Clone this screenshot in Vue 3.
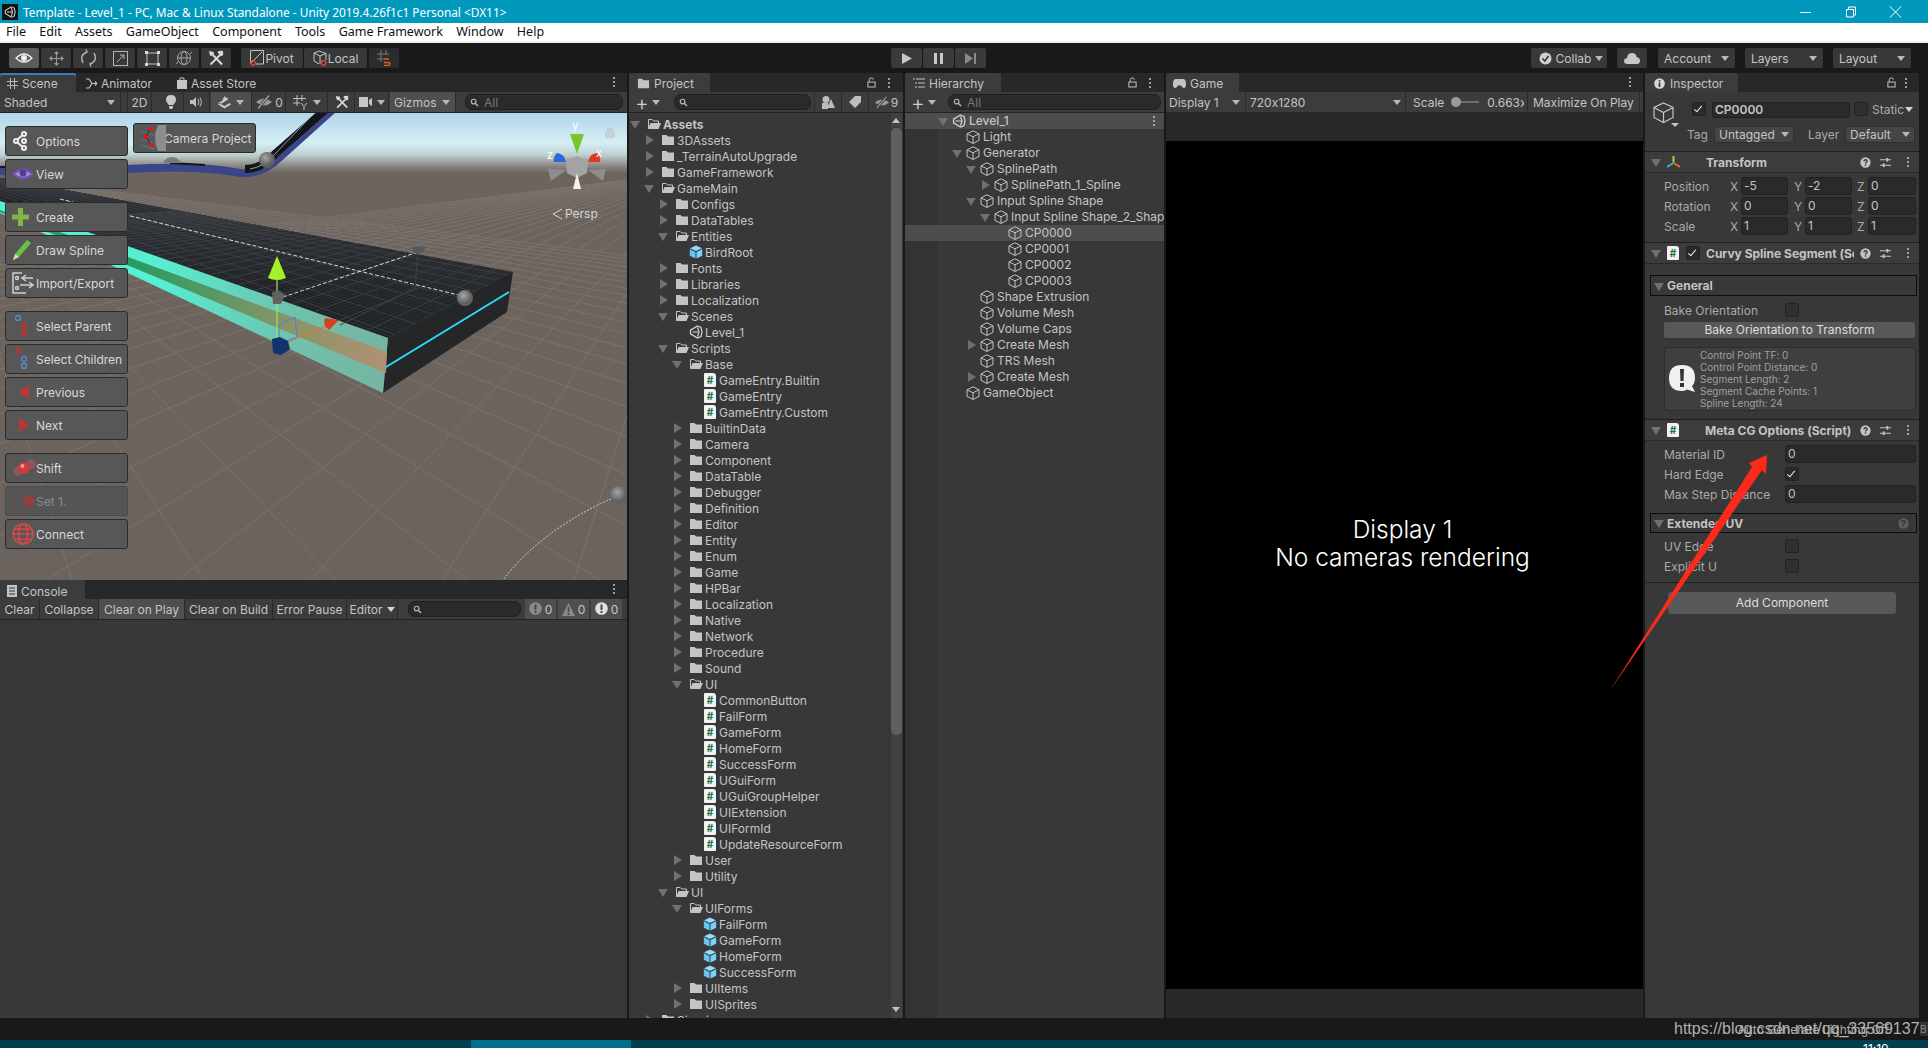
<script setup>
const menus = ['File', 'Edit', 'Assets', 'GameObject', 'Component', 'Tools', 'Game Framework', 'Window', 'Help']

// project tree: [name, depth, kind]  kind: o=open c=closed s=script p=prefab u=scene
const projectRows = [
  ['Assets', 0, 'o'], ['3DAssets', 1, 'c'], ['_TerrainAutoUpgrade', 1, 'c'], ['GameFramework', 1, 'c'],
  ['GameMain', 1, 'o'], ['Configs', 2, 'c'], ['DataTables', 2, 'c'], ['Entities', 2, 'o'], ['BirdRoot', 3, 'p'],
  ['Fonts', 2, 'c'], ['Libraries', 2, 'c'], ['Localization', 2, 'c'], ['Scenes', 2, 'o'], ['Level_1', 3, 'u'],
  ['Scripts', 2, 'o'], ['Base', 3, 'o'], ['GameEntry.Builtin', 4, 's'], ['GameEntry', 4, 's'], ['GameEntry.Custom', 4, 's'],
  ['BuiltinData', 3, 'c'], ['Camera', 3, 'c'], ['Component', 3, 'c'], ['DataTable', 3, 'c'], ['Debugger', 3, 'c'],
  ['Definition', 3, 'c'], ['Editor', 3, 'c'], ['Entity', 3, 'c'], ['Enum', 3, 'c'], ['Game', 3, 'c'], ['HPBar', 3, 'c'],
  ['Localization', 3, 'c'], ['Native', 3, 'c'], ['Network', 3, 'c'], ['Procedure', 3, 'c'], ['Sound', 3, 'c'],
  ['UI', 3, 'o'], ['CommonButton', 4, 's'], ['FailForm', 4, 's'], ['GameForm', 4, 's'], ['HomeForm', 4, 's'],
  ['SuccessForm', 4, 's'], ['UGuiForm', 4, 's'], ['UGuiGroupHelper', 4, 's'], ['UIExtension', 4, 's'], ['UIFormId', 4, 's'],
  ['UpdateResourceForm', 4, 's'], ['User', 3, 'c'], ['Utility', 3, 'c'], ['UI', 2, 'o'], ['UIForms', 3, 'o'],
  ['FailForm', 4, 'p'], ['GameForm', 4, 'p'], ['HomeForm', 4, 'p'], ['SuccessForm', 4, 'p'], ['UIItems', 3, 'c'],
  ['UISprites', 3, 'c'], ['Sirenix', 1, 'c'],
].map(([name, depth, kind]) => ({ name, depth, kind }))

// hierarchy: [name, depth, arrow]
const hierarchyRows = [
  ['Light', 1, ''], ['Generator', 1, 'o'], ['SplinePath', 2, 'o'], ['SplinePath_1_Spline', 3, 'c'],
  ['Input Spline Shape', 2, 'o'], ['Input Spline Shape_2_Shape', 3, 'o'], ['CP0000', 4, ''], ['CP0001', 4, ''],
  ['CP0002', 4, ''], ['CP0003', 4, ''], ['Shape Extrusion', 2, ''], ['Volume Mesh', 2, ''], ['Volume Caps', 2, ''],
  ['Create Mesh', 2, 'c'], ['TRS Mesh', 2, ''], ['Create Mesh', 2, 'c'], ['GameObject', 1, ''],
].map(([name, depth, arrow]) => ({ name, depth, arrow }))

const helpLines = ['Control Point TF: 0', 'Control Point Distance: 0', 'Segment Length: 2', 'Segment Cache Points: 1', 'Spline Length: 24']

const vectors = [
  { label: 'Position', x: '-5', y: '-2', z: '0' },
  { label: 'Rotation', x: '0', y: '0', z: '0' },
  { label: 'Scale', x: '1', y: '1', z: '1' },
]

// floor grid, two fans of lines out of the vanishing points
const HORIZON = 57
const BOTTOM = 467
function fan(vx, from, step, count) {
  const lines = []
  for (let i = 0; i < count; i++) {
    const bx = from + i * step
    const top = HORIZON + 8
    lines.push({
      x1: vx + (bx - vx) * (top - HORIZON) / (BOTTOM - HORIZON),
      y1: top,
      x2: bx,
      y2: BOTTOM,
    })
  }
  return lines
}
const groundLines = [...fan(-60, -60, 132, 26), ...fan(706, 706, -132, 26)]
const deckMinor = [...fan(-60, -60, 27, 200), ...fan(706, 706, -27, 200)]
const deckMajor = [...fan(-60, -6, 135, 40), ...fan(706, 652, -135, 40)]
</script>

<template>
  <div class="editor">
    <!-- shared icons -->
    <svg class="defs" width="0" height="0">
      <symbol id="i-cube" viewBox="0 0 14 14">
        <path d="M7 .8 13 3.800V10.400L7 13.400 1 10.400V3.800ZM1 3.800 7 6.800 13 3.800M7 6.800V13.400" fill="none" stroke="#c4c4c4" stroke-width="1" />
      </symbol>
      <symbol id="i-folder" viewBox="0 0 14 14">
        <path d="M1 2H5.500L7 3.500H13V12H1Z" fill="#c4c4c4" />
      </symbol>
      <symbol id="i-folder-open" viewBox="0 0 14 14">
        <path d="M1.500 11V2.500H5.200L6.700 4H11.500V6" fill="none" stroke="#c4c4c4" />
        <path d="M3.500 6H14L11.500 12H1Z" fill="#c4c4c4" />
      </symbol>
      <symbol id="i-prefab" viewBox="0 0 14 14">
        <path d="M7 .5 13 3.300 7 6 1 3.300Z" fill="#8fdcff" />
        <path d="M.8 4.200 6.500 6.900V13.600L.8 10.800Z" fill="#62c6f6" />
        <path d="M13.200 4.200 7.500 6.900V13.600L13.200 10.800Z" fill="#7ad2fb" />
      </symbol>
      <symbol id="i-unity" viewBox="0 0 14 14">
        <path d="M8.500 1 12 2.500 13 7 12 11.500 8.500 13 1.500 8.800V5.200ZM3.500 7H9M8.500 2.500 10 7 8.500 11.500" fill="none" stroke="#d6d6d6" stroke-width="1.200" />
      </symbol>
      <symbol id="i-hide" viewBox="0 0 18 14">
        <path d="M1 7Q9 0 17 7 9 14 1 7Z" fill="#9a9a9a" />
        <path d="M3 13.500 14 .5" stroke="#3c3c3c" stroke-width="3" />
        <path d="M3 13.500 14 .5" stroke="#a6a6a6" stroke-width="1.200" />
      </symbol>
      <symbol id="i-tools" viewBox="0 0 16 16">
        <path d="M5 5 14 14.500" stroke="#d8d8d8" stroke-width="2" />
        <path d="M1 1 5.500 2 6 4 4 6 2 5.500Z" fill="#d8d8d8" />
        <path d="M13 4 2.500 14.500" stroke="#d8d8d8" stroke-width="2" />
        <path d="M10.500 1 15 .8 15.200 5 13.500 6.300 9.500 2.500Z" fill="#d8d8d8" />
      </symbol>
      <symbol id="i-help" viewBox="0 0 12 12">
        <circle cx="6" cy="6" r="5.600" fill="currentColor" />
        <path d="M4.200 4.800Q4.400 3 6 3 7.800 3 7.800 4.500 7.800 5.400 6.800 5.900 6 6.300 6 7.200" fill="none" stroke="#383838" stroke-width="1.400" />
        <rect x="5.200" y="8" width="1.600" height="1.500" fill="#383838" />
      </symbol>
      <symbol id="i-sliders" viewBox="0 0 12 12">
        <path d="M0 3H12M0 9H12" stroke="#c4c4c4" stroke-width="1.300" />
        <rect x="7" y="1" width="2" height="4" fill="#c4c4c4" />
        <rect x="3" y="7" width="2" height="4" fill="#c4c4c4" />
      </symbol>
      <symbol id="i-lock" viewBox="0 0 10 12">
        <path d="M2.500 5V2.800Q2.500 1 4.800 1 7 1 7 2.800" fill="none" stroke="#c4c4c4" stroke-width="1.100" />
        <rect x="1" y="5.500" width="8" height="5.500" fill="none" stroke="#c4c4c4" stroke-width="1.100" />
      </symbol>
      <symbol id="i-mag" viewBox="0 0 10 10">
        <circle cx="4" cy="4" r="2.600" fill="none" stroke="#b8b8b8" stroke-width="1.300" />
        <path d="M6 6 9 9" stroke="#b8b8b8" stroke-width="1.600" />
      </symbol>
    </svg>

    <!-- window title -->
    <header class="titlebar">
      <span class="app-icon"><svg width="12" height="12"><use href="#i-unity" /></svg></span>
      <span class="title-text">Template - Level_1 - PC, Mac &amp; Linux Standalone - Unity 2019.4.26f1c1 Personal &lt;DX11&gt;</span>
      <div class="win-btns">
        <svg class="win-btn" viewBox="0 0 45 12"><path d="M17 6.500H28" stroke="#fff" /></svg>
        <svg class="win-btn" viewBox="0 0 45 12"><path d="M18.500 3.500H25.500V11H18.500ZM20.500 3.500V1H27.500V9H25.500" fill="none" stroke="#fff" /></svg>
        <svg class="win-btn" viewBox="0 0 45 12"><path d="M17 .5 28 11.500M28 .5 17 11.500" stroke="#fff" /></svg>
      </div>
    </header>

    <nav class="menubar">
      <span v-for="m in menus" :key="m">{{ m }}</span>
    </nav>

    <!-- main toolbar -->
    <div class="toolbar">
      <div class="tool-group">
        <span class="tool tool--on">
          <svg width="18" height="14" viewBox="0 0 18 14"><path d="M1 7Q9 -1 17 7 9 15 1 7Z" fill="none" stroke="#eee" stroke-width="1.300" /><circle cx="9" cy="7" r="3" fill="#eee" /></svg>
        </span>
        <span class="tool">
          <svg width="17" height="17" viewBox="0 0 17 17" fill="#9a9a9a"><path d="M8.500 1 11 4H6ZM8.500 16 6 13H11ZM1 8.500 4 6V11ZM16 8.500 13 11V6Z" /><path d="M8.500 3V14M3 8.500H14" stroke="#9a9a9a" /></svg>
        </span>
        <span class="tool">
          <svg width="17" height="18" viewBox="0 0 17 18" fill="none" stroke="#b4b4b4" stroke-width="1.400"><path d="M3 14Q-1 6 7 3L6 .5M14 4Q18 12 10 15L11 17.500" /></svg>
        </span>
        <span class="tool">
          <svg width="15" height="15" viewBox="0 0 15 15" fill="none" stroke="#b4b4b4"><rect x=".5" y=".5" width="14" height="14" /><path d="M4 11 11 4M7 4H11V8" /></svg>
        </span>
        <span class="tool">
          <svg width="15" height="15" viewBox="0 0 15 15"><rect x="2" y="2" width="11" height="11" fill="none" stroke="#c0c0c0" /><path d="M0 0H3V3H0ZM12 0H15V3H12ZM0 12H3V15H0ZM12 12H15V15H12Z" fill="#d8d8d8" /></svg>
        </span>
        <span class="tool">
          <svg width="18" height="18" viewBox="0 0 18 18" fill="none" stroke="#a8a8a8"><circle cx="9" cy="9" r="6.500" /><ellipse cx="9" cy="9" rx="3" ry="6.500" /><path d="M2.500 9H15.500M1 15 4 12M17 3 14 6" /></svg>
        </span>
        <span class="tool"><svg width="16" height="16"><use href="#i-tools" /></svg></span>
      </div>
      <span class="tool tool--wide tool--pivot">
        <svg width="14" height="16" viewBox="0 0 14 16" fill="none"><path d="M.5 14V.5H13.500V14H6M1 13 12 2" stroke="#c4c4c4" /><circle cx="3" cy="13" r="2.300" stroke="#e4513a" stroke-width="1.200" /></svg>
        Pivot
      </span>
      <span class="tool tool--wide tool--local">
        <svg width="14" height="16" viewBox="0 0 14 16" fill="none"><path d="M6 1 13 3.500V10M6 1 1 3V11L6 14M1 3 7 6V14M7 6 13 3.500" stroke="#c4c4c4" /><circle cx="10.500" cy="13" r="2.300" stroke="#e4513a" stroke-width="1.200" /></svg>
        Local
      </span>
      <span class="tool tool--dim tool--snap">
        <svg width="14" height="16" viewBox="0 0 14 16" fill="none"><path d="M4 0V12M9 0V5M0 4H12M0 9H7" stroke="#7b7b7b" /><path d="M7 9H12M7 12.500H11Q13 12.500 13 14 13 15.500 11 15.500H7" stroke="#d46a2a" stroke-width="1.300" /></svg>
      </span>
      <div class="play-group">
        <span class="tool tool--play"><svg width="10" height="11" viewBox="0 0 10 11"><path d="M0 0 10 5.500 0 11Z" fill="#c8c8c8" /></svg></span>
        <span class="tool tool--play"><svg width="9" height="11" viewBox="0 0 9 11"><path d="M0 0H3V11H0ZM6 0H9V11H6Z" fill="#c8c8c8" /></svg></span>
        <span class="tool tool--play tool--dim"><svg width="11" height="11" viewBox="0 0 11 11"><path d="M0 0 8 5.500 0 11ZM9 0H11V11H9Z" fill="#8a8a8a" /></svg></span>
      </div>
      <div class="right-group">
        <span class="tool drop drop--collab">
          <svg width="13" height="13" viewBox="0 0 13 13"><circle cx="6.500" cy="6.500" r="6" fill="#cfcfcf" /><path d="M3.500 6.500 5.800 9 9.500 4" fill="none" stroke="#333" stroke-width="1.500" /></svg>
          Collab <i class="caret"></i>
        </span>
        <span class="tool drop--cloud">
          <svg width="16" height="12" viewBox="0 0 16 12"><path d="M3.500 12Q0 12 0 9 0 6.500 3 6 3.500 1 8 1 12 1 12.500 5 16 5.500 16 8.500 16 12 12.500 12Z" fill="#c8c8c8" /></svg>
        </span>
        <span class="tool drop drop--account">Account <i class="caret"></i></span>
        <span class="tool drop drop--layers">Layers <i class="caret"></i></span>
        <span class="tool drop drop--layers">Layout <i class="caret"></i></span>
      </div>
    </div>

    <div class="workspace">
      <!-- scene + console -->
      <div class="col-left">
        <section class="scene-panel">
          <div class="tabs">
            <span class="tab tab--focus tab--scene">
              <svg width="11" height="11" viewBox="0 0 11 11"><path d="M3.500 0V11M7.500 0V11M0 3.500H11M0 7.500H11" stroke="#b8b8b8" /></svg>
              Scene
            </span>
            <span class="tab tab--off tab--animator">
              <svg width="11" height="11" viewBox="0 0 11 11"><path d="M0 1H3L6 5.500 3 10H0M6 5.500H11M9 3.500 11 5.500 9 7.500" fill="none" stroke="#c4c4c4" stroke-width="1.200" /></svg>
              Animator
            </span>
            <span class="tab tab--off tab--store">
              <svg width="10" height="12" viewBox="0 0 10 12"><path d="M0 3H10V12H0Z" fill="#c4c4c4" /><path d="M3 3V1H7V3" fill="none" stroke="#c4c4c4" /></svg>
              Asset Store
            </span>
            <span class="kebab"></span>
          </div>
          <div class="bar scene-bar">
            <span class="st st-shaded">Shaded <i class="caret caret--end"></i></span>
            <span class="st st-2d">2D</span>
            <span class="st st-icon">
              <svg width="10" height="14" viewBox="0 0 10 14"><path d="M5 0Q10 0 10 5 10 7.500 7.500 9.500V10H2.500V9.500Q0 7.500 0 5 0 0 5 0ZM3 11H7V12.500L6 14H4L3 12.500Z" fill="#c8c8c8" /></svg>
            </span>
            <span class="st st-icon">
              <svg width="13" height="12" viewBox="0 0 13 12"><path d="M0 4H3L6 1V11L3 8H0Z" fill="#bdbdbd" /><path d="M8 3Q10 6 8 9M10 1.500Q13 6 10 10.500" fill="none" stroke="#bdbdbd" /></svg>
            </span>
            <span class="st st-on st-fx">
              <svg width="13" height="13" viewBox="0 0 13 13"><path d="M6.500 0 8 2 10 1.500 9.500 4 2 8.500 0 7 4 5ZM0 8.500 6.500 12.500 13 8.500 11.500 7 6.500 10 1.500 7Z" fill="#c8c8c8" /></svg>
              <i class="caret"></i>
            </span>
            <span class="st st-hid"><svg width="18" height="14"><use href="#i-hide" /></svg>0</span>
            <span class="st st-grid">
              <svg width="15" height="15" viewBox="0 0 15 15" fill="none" stroke="#c0c0c0"><path d="M4 0V11M9 0V6M0 3.500H13M0 8H7" /><path d="M8 8 11 11.500 14 8M11 11.500V15" /></svg>
              <i class="caret"></i>
            </span>
            <span class="st st-icon st-tools"><svg width="14" height="14"><use href="#i-tools" /></svg></span>
            <span class="st st-cam">
              <svg width="13" height="10" viewBox="0 0 13 10"><path d="M0 0H9V10H0ZM10 3 13 1V9L10 7Z" fill="#c8c8c8" /></svg>
              <i class="caret"></i>
            </span>
            <span class="st st-on st-gizmos">Gizmos <i class="caret caret--end"></i></span>
            <span class="search search--scene"><svg width="9" height="9"><use href="#i-mag" /></svg><em>All</em></span>
          </div>

          <div class="scene-view">
            <svg class="scene-gfx" width="627" height="467" viewBox="0 0 627 467">
              <defs>
                <clipPath id="deck-clip"><path d="M0 65 513 159 388 225 0 88Z" /></clipPath>
                <clipPath id="floor-clip"><rect x="0" y="64" width="627" height="403" /></clipPath>
                <linearGradient id="deck-fill" x1="0" x2="1"><stop offset="0" stop-color="#14171b" /><stop offset="1" stop-color="#24272a" /></linearGradient>
                <linearGradient id="face-fill" x1="0" x2="1"><stop offset=".4" stop-color="#56efd2" /><stop offset=".75" stop-color="#6fc2ad" /><stop offset="1" stop-color="#76b3a2" /></linearGradient>
                <linearGradient id="band-fill" x1="0" x2="1"><stop offset=".35" stop-color="#2a9b62" /><stop offset=".75" stop-color="#8a9468" /><stop offset="1" stop-color="#b09072" /></linearGradient>
                <radialGradient id="ball" cx=".4" cy=".35"><stop offset="0" stop-color="#a4a4a4" /><stop offset="1" stop-color="#606060" /></radialGradient>
              </defs>

              <g clip-path="url(#floor-clip)">
                <line v-for="(l, i) in groundLines" :key="'g' + i" :x1="l.x1" :y1="l.y1" :x2="l.x2" :y2="l.y2" stroke="#7b736d" stroke-width="1" />
              </g>

              <!-- far spline -->
              <path d="M0 58Q60 54 128 56 200 52 240 60 262 62 280 44L340 -10" fill="none" stroke="#3b4688" stroke-width="8" />
              <path d="M0 54 95 52M170 50 205 52" fill="none" stroke="#15171c" stroke-width="2" />
              <path d="M245 56Q262 56 276 40L333 -10" fill="none" stroke="#13151a" stroke-width="8" />
              <path d="M250 56Q264 54 276 40L320 -6" fill="none" stroke="#bdbdbd" stroke-width=".8" />
              <path d="M163 50A10 10 0 0 1 181 50Z" fill="#7a7a7a" />
              <circle cx="267" cy="47" r="8" fill="url(#ball)" />

              <!-- deck -->
              <path d="M0 65 513 159 388 225 0 88Z" fill="url(#deck-fill)" />
              <g clip-path="url(#deck-clip)">
                <line v-for="(l, i) in deckMinor" :key="'m' + i" :x1="l.x1" :y1="l.y1" :x2="l.x2" :y2="l.y2" stroke="#2f3337" stroke-width=".6" />
                <line v-for="(l, i) in deckMajor" :key="'d' + i" :x1="l.x1" :y1="l.y1" :x2="l.x2" :y2="l.y2" stroke="#3f4346" stroke-width=".8" />
              </g>
              <path d="M513 159 507 199 383 280 388 225Z" fill="#242628" />
              <path d="M0 88 388 225 383 280 0 100Z" fill="url(#face-fill)" />
              <path d="M0 97 387 239 386 260 0 99Z" fill="url(#band-fill)" />
              <path d="M386 254 509 179" stroke="#2bdcff" stroke-width="2" />

              <path d="M60 86 467 184M283 184 418 139" fill="none" stroke="#d8d8d8" stroke-dasharray="4 2" stroke-width="1" />
              <path d="M418 139 415 175 340 212" fill="none" stroke="#3e4245" />
              <path d="M412 134H426L423 140H414Z" fill="#55585a" />
              <circle cx="465" cy="185" r="8" fill="url(#ball)" />

              <!-- move gizmo -->
              <path d="M277 163V232" stroke="#a6e05a" stroke-width="1.200" />
              <path d="M277 143 286 165Q277 169 268 165Z" fill="#a4f02c" />
              <path d="M280 232 332 211" stroke="#e86a3c" stroke-width="1.200" />
              <path d="M339 207 325 205Q322 212 329 217Z" fill="#d8401a" />
              <path d="M279 231 279 212 295 204 297 224Z" fill="none" stroke="#4d7fe0" />
              <path d="M272 226 280 224 288 228 290 236 281 242 273 240Z" fill="#12336e" />
              <path d="M272 179 280 178 285 182 281 191 273 191Z" fill="#616161" />

              <!-- end of curve, low right -->
              <path d="M627 379Q545 412 503 467" fill="none" stroke="#d4d4d4" stroke-dasharray="2 1.500" />
              <circle cx="619" cy="382" r="9" fill="url(#ball)" />

              <!-- view gizmo -->
              <g>
                <path d="M570 21H584L577 41Z" fill="#7ac52f" />
                <path d="M588 49Q589 41 597 40 601 44 600 49Z" fill="#df3a22" />
                <path d="M566 49Q565 41 557 40 553 44 554 49Z" fill="#2a68e0" />
                <path d="M577 43 588 47 587 60 577 65 567 60 566 47Z" fill="#a4a4a6" />
                <path d="M566 57 548 56 551 68Z" fill="#8d8d8d" />
                <path d="M588 57 606 56 603 68Z" fill="#8d8d8d" />
                <path d="M577 60 581 76H573Z" fill="#f2f2f2" />
                <text class="axis" x="572" y="17">y</text>
                <text class="axis" x="596" y="44">x</text>
                <text class="axis" x="547" y="46">z</text>
                <path d="M605 18H615V25H605ZM607 18V15H613V18" fill="#b9c4c8" opacity=".6" />
                <path d="M562 96 553 101 562 106" fill="none" stroke="#d8d8d8" stroke-width="1" />
                <text class="persp" x="565" y="105">Persp</text>
              </g>
            </svg>

            <button class="cam-btn">
              <svg width="30" height="26" viewBox="0 0 30 26"><path d="M22 0Q16 13 22 26L30 26V0Z" fill="#8d8d8d" /><path d="M5 6 18 10M5 14 18 18M5 20 18 24" stroke="#3d8cc0" stroke-width=".8" /><path d="M14 4 10 12 15 20" fill="none" stroke="#222" /><rect x="13" y="2" width="4" height="4" fill="#f01010" /><rect x="8" y="10" width="4" height="4" fill="#f01010" /><rect x="13" y="18" width="4" height="4" fill="#f01010" /></svg>
              Camera Project
            </button>

            <div class="spline-tools">
              <div class="btn-group">
                <button>
                  <svg width="20" height="20" viewBox="0 0 20 20" fill="none" stroke="#eee" stroke-width="2"><circle cx="12" cy="3" r="2" /><circle cx="4" cy="10" r="2" /><circle cx="12" cy="10" r="2" /><circle cx="12" cy="17" r="2" /><path d="M5.500 8.500 10 4.500M5.500 11.500 10 15.500" /></svg>
                  Options
                </button>
                <button>
                  <svg width="22" height="14" viewBox="0 0 22 14"><path d="M0 7Q11 -4 22 7 11 18 0 7Z" fill="#6f52b4" /><path d="M3 7Q11 1 19 7 11 13 3 7Z" fill="#a796d4" /><circle cx="11" cy="6" r="3.500" fill="#553c98" /></svg>
                  View
                </button>
              </div>
              <div class="btn-group">
                <button>
                  <svg width="17" height="18" viewBox="0 0 17 18"><path d="M6 0H11V6.500H17V11.500H11V18H6V11.500H0V6.500H6Z" fill="#82b24a" /></svg>
                  Create
                </button>
                <button>
                  <svg width="20" height="22" viewBox="0 0 20 22"><path d="M1 21 3 15 15 1 19 4 7 18Z" fill="#6cc04a" /><path d="M1 21 3 15 7 18Z" fill="#e2d6a0" /></svg>
                  Draw Spline
                </button>
                <button>
                  <svg width="22" height="22" viewBox="0 0 22 22" fill="none" stroke="#d0d0d0" stroke-width="1.500"><path d="M10 1H1V21H10M8 21H14" /><circle cx="5" cy="6" r="1.500" /><circle cx="5" cy="16" r="1.500" /><path d="M10 6H21M14 3 10 6 14 9M8 13H20M17 10 21 13 17 16" /></svg>
                  Import/Export
                </button>
              </div>
              <div class="btn-group">
                <button>
                  <svg width="18" height="22" viewBox="0 0 18 22"><circle cx="6" cy="3" r="2.500" fill="none" stroke="#5d87c9" stroke-width="1.400" /><circle cx="12" cy="11" r="3" fill="#b23636" /><circle cx="12" cy="18" r="3" fill="#b23636" /></svg>
                  Select Parent
                </button>
                <button>
                  <svg width="18" height="22" viewBox="0 0 18 22"><circle cx="6" cy="3" r="3" fill="#b23636" /><circle cx="12" cy="11" r="2.500" fill="none" stroke="#5d87c9" stroke-width="1.400" /><circle cx="12" cy="18" r="2.500" fill="none" stroke="#5d87c9" stroke-width="1.400" /></svg>
                  Select Children
                </button>
                <button>
                  <svg width="20" height="14" viewBox="-6 0 20 14"><path d="M12 0 5 4 0 7 12 14 10 7Z" fill="#c23434" /></svg>
                  Previous
                </button>
                <button>
                  <svg width="20" height="14" viewBox="-6 0 20 14"><path d="M0 0 7 4 12 7 0 14 2 7Z" fill="#c23434" /></svg>
                  Next
                </button>
              </div>
              <div class="btn-group">
                <button>
                  <svg width="24" height="18" viewBox="0 0 24 18"><circle cx="6" cy="12" r="5" fill="#8a5858" /><circle cx="19" cy="5" r="5" fill="#8a5858" /><circle cx="12" cy="9" r="6" fill="#d03a3a" /><circle cx="10.500" cy="7" r="2" fill="#ee9a9a" /></svg>
                  Shift
                </button>
                <button class="is-disabled">
                  <svg width="24" height="14" viewBox="0 0 24 14"><text x="0" y="11" class="set-one">1.</text><circle cx="17" cy="7" r="6" fill="#8f3f3f" /></svg>
                  Set 1.
                </button>
                <button>
                  <svg width="22" height="22" viewBox="0 0 22 22" fill="none" stroke="#d84848" stroke-width="1.500"><circle cx="11" cy="11" r="10" /><ellipse cx="11" cy="11" rx="4.500" ry="10" /><path d="M1 11H21M3 6H19M3 16H19" /></svg>
                  Connect
                </button>
              </div>
            </div>
          </div>
        </section>

        <section class="console-panel">
          <div class="tabs">
            <span class="tab tab--console">
              <svg width="10" height="12" viewBox="0 0 10 12"><path d="M0 0H10V12H0Z" fill="#c4c4c4" /><path d="M2 3H8M2 6H8M2 9H8" stroke="#333" /></svg>
              Console
            </span>
            <span class="kebab"></span>
          </div>
          <div class="bar console-bar">
            <span class="ct ct-clear">Clear</span>
            <span class="ct ct-collapse">Collapse</span>
            <span class="ct ct-on ct-play">Clear on Play</span>
            <span class="ct ct-build">Clear on Build</span>
            <span class="ct ct-pause">Error Pause</span>
            <span class="ct ct-editor">Editor <i class="caret caret--light"></i></span>
            <span class="search search--console"><svg width="9" height="9"><use href="#i-mag" /></svg></span>
            <span class="count">
              <svg width="13" height="14" viewBox="0 0 13 14"><circle cx="6.500" cy="6.500" r="6.300" fill="#8a8a8a" /><path d="M5.500 2.500H7.500V8H5.500ZM5.500 9H7.500V11H5.500Z" fill="#444" /></svg>0
            </span>
            <span class="count">
              <svg width="13" height="13" viewBox="0 0 13 13"><path d="M6.500 0 13 13H0Z" fill="#8a8a8a" /><path d="M5.700 4H7.300V9H5.700ZM5.700 10H7.300V12H5.700Z" fill="#444" /></svg>0
            </span>
            <span class="count">
              <svg width="13" height="14" viewBox="0 0 13 14"><circle cx="6.500" cy="6.500" r="6.300" fill="#e2e2e2" /><path d="M5.500 2.500H7.500V8H5.500ZM5.500 9H7.500V11H5.500Z" fill="#444" /></svg>0
            </span>
          </div>
          <div class="console-body"></div>
        </section>
      </div>

      <!-- project -->
      <section class="panel project">
        <div class="tabs">
          <span class="tab tab--project">
            <svg width="13" height="13"><use href="#i-folder" /></svg>
            Project
          </span>
          <span class="tab-actions"><svg width="9" height="11"><use href="#i-lock" /></svg><span class="kebab kebab--static"></span></span>
        </div>
        <div class="bar project-bar">
          <span class="plus">+<i class="caret"></i></span>
          <span class="search search--project"><svg width="9" height="9"><use href="#i-mag" /></svg></span>
          <span class="pb">
            <svg width="13" height="13" viewBox="0 0 13 13"><circle cx="4" cy="3.500" r="3.500" fill="#bdbdbd" /><rect x="0" y="7" width="6" height="6" fill="#bdbdbd" /><path d="M9 3 13 12H5Z" fill="#bdbdbd" /></svg>
          </span>
          <span class="pb">
            <svg width="12" height="12" viewBox="0 0 12 12"><path d="M6 0H12V6L6 12 0 6Z" fill="#bdbdbd" /></svg>
          </span>
          <span class="pb pb--hide"><svg width="16" height="13"><use href="#i-hide" /></svg>9</span>
        </div>
        <div class="tree-wrap">
          <div class="tree">
            <div v-for="(row, i) in projectRows" :key="i" class="row" :class="{ 'row--root': row.depth === 0 }" :style="{ paddingLeft: 1 + row.depth * 14 + 'px' }">
              <i class="arrow" :class="{ 'arrow--open': row.kind === 'o', 'arrow--closed': row.kind === 'c' }"></i>
              <span v-if="row.kind === 's'" class="script-icon">#</span>
              <svg v-else-if="row.kind === 'p'" class="row-icon" width="14" height="14"><use href="#i-prefab" /></svg>
              <svg v-else-if="row.kind === 'u'" class="row-icon" width="14" height="14"><use href="#i-unity" /></svg>
              <svg v-else-if="row.kind === 'o'" class="row-icon" width="14" height="14"><use href="#i-folder-open" /></svg>
              <svg v-else class="row-icon" width="14" height="14"><use href="#i-folder" /></svg>
              <span class="row-name">{{ row.name }}</span>
            </div>
          </div>
          <div class="scroll">
            <i class="scroll-up"></i>
            <span class="scroll-thumb"></span>
            <i class="scroll-down"></i>
          </div>
        </div>
      </section>

      <!-- hierarchy -->
      <section class="panel hierarchy">
        <div class="tabs">
          <span class="tab tab--hier">
            <svg width="12" height="10" viewBox="0 0 12 10"><path d="M0 1H2M3 1H12M2 5H4M5 5H12M2 9H4M5 9H12" stroke="#c4c4c4" /></svg>
            Hierarchy
          </span>
          <span class="tab-actions"><svg width="9" height="11"><use href="#i-lock" /></svg><span class="kebab kebab--static"></span></span>
        </div>
        <div class="bar hier-bar">
          <span class="plus plus--hier">+<i class="caret"></i></span>
          <span class="search search--hier"><svg width="9" height="9"><use href="#i-mag" /></svg><em>All</em></span>
        </div>
        <div class="hier-tree">
          <div class="hier-scene">
            <i class="arrow arrow--open"></i>
            <svg class="row-icon" width="14" height="14"><use href="#i-unity" /></svg>
            <span>Level_1</span>
            <span class="kebab kebab--scene"></span>
          </div>
          <div
            v-for="(row, i) in hierarchyRows"
            :key="i"
            class="hier-row"
            :class="{ 'hier-row--sel': row.name === 'CP0000' }"
            :style="{ paddingLeft: 47 + (row.depth - 1) * 14 + 'px' }"
          >
            <i class="arrow" :class="{ 'arrow--open': row.arrow === 'o', 'arrow--closed': row.arrow === 'c' }"></i>
            <svg class="hier-icon" width="14" height="14"><use href="#i-cube" /></svg>
            <span class="row-name">{{ row.name }}</span>
          </div>
        </div>
      </section>

      <!-- game -->
      <section class="panel game">
        <div class="tabs">
          <span class="tab tab--game">
            <svg width="13" height="9" viewBox="0 0 13 9"><path d="M3 0H10Q13 0 13 5 13 9 11 9 9.500 9 8 6.500H5Q3.500 9 2 9 0 9 0 5 0 0 3 0Z" fill="#c4c4c4" /></svg>
            Game
          </span>
          <span class="kebab"></span>
        </div>
        <div class="bar game-bar">
          <span class="gt gt-display">Display 1 <i class="caret caret--end"></i></span>
          <span class="gt gt-res">720x1280 <i class="caret caret--end"></i></span>
          <span class="gt gt-scale">Scale <i class="slider"></i><em class="scale-val">0.663x</em></span>
          <span class="gt gt-max">Maximize On Play</span>
        </div>
        <div class="game-strip"></div>
        <div class="game-screen">
          <p>Display 1</p>
          <p>No cameras rendering</p>
        </div>
        <div class="game-foot"></div>
      </section>

      <!-- inspector -->
      <section class="panel inspector">
        <div class="tabs">
          <span class="tab tab--insp">
            <svg width="11" height="11" viewBox="0 0 11 11"><circle cx="5.500" cy="5.500" r="5.300" fill="#d8d8d8" /><path d="M4.700 2H6.300V3.500H4.700ZM4.700 4.500H6.300V9H4.700Z" fill="#333" /></svg>
            Inspector
          </span>
          <span class="tab-actions tab-actions--insp"><svg width="9" height="11"><use href="#i-lock" /></svg><span class="kebab kebab--static"></span></span>
        </div>
        <div class="insp-head">
          <div class="head-row">
            <svg class="big-cube" width="28" height="28" viewBox="0 0 28 28">
              <path d="M10.500 1 20 5.500V15.500L10.500 20.500 1 15.500V5.500ZM1 5.500 10.500 10.500 20 5.500M10.500 10.500V20.500" fill="none" stroke="#c4c4c4" stroke-width="1.200" />
              <path d="M18 21H26L22 25Z" fill="#c4c4c4" />
            </svg>
            <span class="check check--on"></span>
            <span class="name-input">CP0000</span>
            <span class="check check--static"></span>
            <span class="static-label">Static <i class="caret caret--light"></i></span>
          </div>
          <div class="tag-row">
            <span class="tag-label">Tag</span>
            <span class="pop pop--tag">Untagged <i class="caret caret--end"></i></span>
            <span class="tag-label tag-label--layer">Layer</span>
            <span class="pop pop--layer">Default <i class="caret caret--end"></i></span>
          </div>
        </div>

        <div class="comp-head">
          <i class="arrow arrow--open"></i>
          <svg class="transform-icon" width="13" height="13" viewBox="0 0 13 13"><path d="M6.500 0V6.500" stroke="#9bdc3c" stroke-width="2" /><path d="M6.500 7 0 11" stroke="#3ea8e6" stroke-width="2" /><path d="M6.500 7 13 11" stroke="#e4692c" stroke-width="2" /></svg>
          <span class="comp-title comp-title--plain">Transform</span>
          <span class="comp-actions"><svg width="11" height="11" class="help"><use href="#i-help" /></svg><svg width="11" height="11"><use href="#i-sliders" /></svg><span class="kebab kebab--static"></span></span>
        </div>
        <div class="transform-body">
          <div v-for="v in vectors" :key="v.label" class="vec-row">
            <span class="vec-label">{{ v.label }}</span>
            <span class="axis-label">X</span><span class="field vec-field">{{ v.x }}</span>
            <span class="axis-label axis-label--y">Y</span><span class="field vec-field">{{ v.y }}</span>
            <span class="axis-label axis-label--z">Z</span><span class="field vec-field vec-field--z">{{ v.z }}</span>
          </div>
        </div>

        <div class="comp-head">
          <i class="arrow arrow--open"></i>
          <span class="script-icon script-icon--comp">#</span>
          <span class="check check--on check--comp"></span>
          <span class="comp-title comp-title--clip">Curvy Spline Segment (Script)</span>
          <span class="comp-actions"><svg width="11" height="11" class="help"><use href="#i-help" /></svg><svg width="11" height="11"><use href="#i-sliders" /></svg><span class="kebab kebab--static"></span></span>
        </div>
        <div class="segment-body">
          <div class="foldout"><i class="arrow arrow--open"></i>General</div>
          <div class="prop prop--bake"><span class="prop-label">Bake Orientation</span><span class="check"></span></div>
          <div class="wide-btn">Bake Orientation to Transform</div>
          <div class="helpbox">
            <svg class="help-bubble" width="26" height="28" viewBox="0 0 26 28"><path d="M13 0Q26 0 26 13 26 18 23 21L26 27 18 24.500Q15.500 26 13 26 0 26 0 13 0 0 13 0Z" fill="#f0f0f0" /><path d="M11 4H15L14.500 16H11.500ZM11 18H15V22H11Z" fill="#333" /></svg>
            <div class="help-lines"><div v-for="l in helpLines" :key="l">{{ l }}</div></div>
          </div>
        </div>

        <div class="comp-head">
          <i class="arrow arrow--open"></i>
          <span class="script-icon script-icon--comp">#</span>
          <span class="comp-title comp-title--meta">Meta CG Options (Script)</span>
          <span class="comp-actions"><svg width="11" height="11" class="help"><use href="#i-help" /></svg><svg width="11" height="11"><use href="#i-sliders" /></svg><span class="kebab kebab--static"></span></span>
        </div>
        <div class="meta-body">
          <div class="prop"><span class="prop-label">Material ID</span><span class="field prop-field">0</span></div>
          <div class="prop"><span class="prop-label">Hard Edge</span><span class="check check--on"></span></div>
          <div class="prop"><span class="prop-label">Max Step Distance</span><span class="field prop-field">0</span></div>
          <div class="foldout foldout--uv"><i class="arrow arrow--open"></i>Extended UV<svg class="fold-help" width="11" height="11"><use href="#i-help" /></svg></div>
          <div class="prop"><span class="prop-label">UV Edge</span><span class="check"></span></div>
          <div class="prop"><span class="prop-label">Explicit U</span><span class="check"></span></div>
        </div>
        <div class="add-wrap"><div class="add-btn">Add Component</div></div>
      </section>
    </div>

    <footer class="statusbar">
      <span class="status-text">Auto Generate Lighting Off</span>
      <span class="status-b">B</span>
    </footer>
    <div class="taskbar">
      <span class="task-active"></span>
      <span class="task-clock">11:10</span>
    </div>

    <!-- annotations laid over the screenshot -->
    <svg class="annot-arrow" width="1928" height="1048" viewBox="0 0 1928 1048">
      <path d="M1609 692 1752 467 1749 463 1767 455 1766 474 1762 470Z" fill="#fb2a1a" />
    </svg>
    <span class="watermark">https://blog.csdn.net/qq_33569137</span>
  </div>
</template>

<style>
html, body {
  margin: 0;
  background: #191919;
  overflow: hidden;
}
</style>

<style scoped>
.editor {
  position: relative;
  width: 1928px;
  height: 1048px;
  display: flex;
  flex-direction: column;
  overflow: hidden;
  background: #191919;
  color: #c4c4c4;
  font-family: Inter, "Liberation Sans", sans-serif;
  font-size: 12px;
  font-feature-settings: "calt" 0;
}

.defs { position: absolute; }

i { font-style: normal; }
em { font-style: normal; }
p { margin: 0; }

/* window chrome */
.titlebar {
  height: 23px;
  background: #0099bc;
  display: flex;
  align-items: center;
  color: #fff;
  font-family: "Noto Sans", sans-serif;
  font-size: 11.850px;
  flex-shrink: 0;
}
.app-icon {
  width: 16px;
  height: 16px;
  margin: 0 5px 0 2px;
  background: #111;
  display: flex;
  align-items: center;
  justify-content: center;
}
.win-btns {
  margin-left: auto;
  padding-right: 10px;
  display: flex;
}
.win-btn { width: 45px; height: 12px; }

.menubar {
  height: 18px;
  border-bottom: 2px solid #f0f0f0;
  background: #fff;
  color: #111;
  font-family: "Noto Sans", sans-serif;
  font-size: 12.500px;
  line-height: 18px;
  display: flex;
  gap: 13.300px;
  padding-left: 6px;
  flex-shrink: 0;
}

.toolbar {
  height: 30px;
  display: flex;
  align-items: flex-start;
  padding: 5px 17px 0 9px;
  box-sizing: border-box;
  flex-shrink: 0;
}
.tool-group { display: flex; gap: 2px; margin-right: 10px; }
.tool {
  width: 30px;
  height: 20px;
  background: #383838;
  border-radius: 2px;
  display: flex;
  align-items: center;
  justify-content: center;
  color: #c4c4c4;
  box-sizing: border-box;
  flex-shrink: 0;
}
.tool--on { background: #5c5c5c; }
.tool--dim { background: #2c2c2c; }
.tool--wide { gap: 1px; }
.tool--pivot { width: 62px; margin-right: 1px; }
.tool--local { width: 63px; margin-right: 2px; }
.tool--snap { width: 30px; }
.play-group { display: flex; gap: 1px; margin-left: 492px; }
.tool--play { width: 31px; background: #3a3a3a; }
.right-group { display: flex; margin-left: auto; gap: 10px; }
.drop { justify-content: space-between; padding: 0 6px; }
.drop--collab { width: 76px; padding: 0 4px 0 8px; }
.drop--cloud { width: 30px; margin-right: 1px; }
.drop--account { width: 77px; }
.drop--layers { width: 78px; }

.caret {
  display: inline-block;
  width: 0;
  height: 0;
  border-left: 4px solid transparent;
  border-right: 4px solid transparent;
  border-top: 5px solid #b8b8b8;
}
.caret--light { border-top-color: #d4d4d4; }

/* panels */
.workspace {
  flex: 1;
  min-height: 0;
  display: flex;
  gap: 2px;
  padding-right: 9px;
}
.panel {
  display: flex;
  flex-direction: column;
  background: #383838;
  min-width: 0;
  overflow: hidden;
}
.col-left {
  width: 627px;
  display: flex;
  flex-direction: column;
  flex-shrink: 0;
}
.project { width: 274px; }
.hierarchy { width: 259px; }
.game { width: 477px; background: #282828; }
.inspector { width: 274px; }

.tabs {
  height: 19px;
  background: #282828;
  display: flex;
  align-items: stretch;
  flex-shrink: 0;
  position: relative;
}
.tab {
  background: #3c3c3c;
  display: flex;
  align-items: center;
  gap: 4px;
  padding-left: 7px;
  color: #c4c4c4;
  box-sizing: border-box;
  border-radius: 2px 2px 0 0;
  padding-top: 1px;
}
.tab--focus { box-shadow: inset 0 2px 0 #3a79bb; }
.tab--scene { width: 76px; }
.tab--off { background: transparent; }
.tab--animator { width: 93px; padding-left: 10px; }
.tab--store { padding-left: 9px; margin-left: -1px; }
.tab--console { width: 85px; padding-top: 3px; }
.tab--project { width: 81px; padding-left: 8px; }
.tab--hier { width: 96px; padding-left: 8px; }
.tab--game { width: 73px; padding-left: 7px; }
.tab--insp { width: 93px; padding-left: 9px; gap: 5px; }

.kebab {
  position: absolute;
  right: 12px;
  top: 4px;
  width: 2px;
  height: 2px;
  background: #c4c4c4;
  box-shadow: 0 4px 0 #c4c4c4, 0 8px 0 #c4c4c4;
  border-radius: 1px;
}
.kebab--static { position: static; display: inline-block; margin-bottom: 8px; }
.tab-actions {
  margin-left: auto;
  padding-right: 13px;
  display: flex;
  align-items: center;
  gap: 12px;
}
.tab-actions--insp { padding-right: 12px; gap: 9px; }

.bar {
  height: 21px;
  background: #3c3c3c;
  border-bottom: 1px solid #232323;
  box-sizing: border-box;
  display: flex;
  align-items: center;
  flex-shrink: 0;
}

.search {
  height: 16px;
  background: #2a2a2a;
  border: 1px solid #1f1f1f;
  border-radius: 7px;
  display: flex;
  align-items: center;
  gap: 5px;
  padding-left: 4px;
  box-sizing: border-box;
  color: #777;
}

/* scene */
.scene-panel {
  height: 507px;
  display: flex;
  flex-direction: column;
  flex-shrink: 0;
  overflow: hidden;
}
.scene-bar .st {
  height: 20px;
  display: flex;
  align-items: center;
  justify-content: center;
  gap: 5px;
  border-right: 1px solid #2a2a2a;
  box-sizing: border-box;
  flex-shrink: 0;
}
.caret--end { margin-left: auto; }
.st-on { background: #4f4f4f; }
.scene-bar .st-shaded { width: 121px; justify-content: flex-start; padding: 0 5px 0 4px; margin-right: 6px; }
.scene-bar .st-2d { width: 25px; margin-right: 6px; border-left: 1px solid #2a2a2a; }
.scene-bar .st-icon { width: 26px; }
.scene-bar .st-fx { width: 41px; margin: 0 1px; }
.scene-bar .st-hid { width: 33px; margin-right: 1px; gap: 2px; }
.scene-bar .st-grid { width: 41px; margin-right: 1px; }
.scene-bar .st-tools { margin-right: 1px; }
.scene-bar .st-cam { width: 33px; margin-right: 1px; }
.scene-bar .st-gizmos { width: 66px; justify-content: flex-start; padding: 0 5px 0 4px; margin-right: 9px; }
.search--scene { width: 158px; }

.scene-view {
  position: relative;
  flex: 1;
  overflow: hidden;
  background: linear-gradient(#b0d4ea 0, #d6eff3 30px, #bcd0d0 42px, #8f8c88 52px, #6d645e 60px, #6b635d 100%);
}
.scene-gfx { position: absolute; left: 0; top: 0; display: block; }
.axis { fill: #fff; font-size: 11px; font-family: Inter, sans-serif; }
.persp { fill: #d4d4d4; font-size: 12px; font-family: Inter, sans-serif; }
.set-one { fill: #6e4a4a; font-size: 11px; font-family: Inter, sans-serif; }

button {
  width: 123px;
  height: 30px;
  background: #575757;
  border: 1px solid #2b2b2b;
  border-radius: 3px;
  color: #d8d8d8;
  font: inherit;
  font-feature-settings: "calt" 0;
  display: flex;
  align-items: center;
  padding: 0;
  position: relative;
  box-sizing: border-box;
  text-align: left;
}
button svg {
  position: absolute;
  left: 6px;
  top: 50%;
  transform: translateY(-50%);
}
.spline-tools {
  position: absolute;
  left: 5px;
  top: 13px;
  display: flex;
  flex-direction: column;
  gap: 13px;
}
.btn-group { display: flex; flex-direction: column; gap: 3px; }
.spline-tools button { padding-left: 30px; }
.is-disabled { background: #555; color: #8a8a8a; border-color: #4a4a4a; }
.cam-btn {
  position: absolute;
  left: 133px;
  top: 10px;
  padding-left: 30px;
}
.cam-btn svg { left: 2px; }

/* console */
.console-panel {
  flex: 1;
  display: flex;
  flex-direction: column;
  min-height: 0;
}
.console-bar .ct {
  height: 20px;
  display: flex;
  align-items: center;
  justify-content: center;
  border-right: 1px solid #2a2a2a;
  box-sizing: border-box;
  flex-shrink: 0;
}
.ct-on { background: #4f4f4f; }
.ct-clear { width: 40px; }
.ct-collapse { width: 59px; }
.ct-play { width: 86px; }
.ct-build { width: 88px; }
.ct-pause { width: 74px; }
.ct-editor { width: 51px; gap: 4px; margin-right: 10px; }
.search--console { width: 113px; margin-right: 4px; }
.count {
  width: 31px;
  height: 20px;
  margin-right: 2px;
  background: #4f4f4f;
  display: flex;
  align-items: center;
  justify-content: center;
  gap: 3px;
  flex-shrink: 0;
}
.console-body { flex: 1; background: #383838; }

/* trees */
.project-bar { padding-left: 6px; }
.plus {
  display: flex;
  align-items: center;
  font-size: 21px;
  font-weight: 300;
  line-height: 1;
  gap: 3px;
  width: 39px;
  flex-shrink: 0;
  color: #d0d0d0;
}
.plus--hier { width: 37px; }
.search--project { width: 141px; margin-right: 3px; }
.pb {
  width: 26px;
  height: 20px;
  border-left: 1px solid #2a2a2a;
  display: flex;
  align-items: center;
  justify-content: center;
  gap: 1px;
  flex-shrink: 0;
}
.pb--hide { width: 34px; }

.tree-wrap {
  flex: 1;
  min-height: 0;
  display: flex;
  overflow: hidden;
}
.tree {
  flex: 1;
  min-width: 0;
  padding-top: 3px;
  overflow: hidden;
}
.row {
  height: 16px;
  display: flex;
  align-items: center;
  white-space: nowrap;
}
.row--root { font-weight: 700; }
.arrow {
  width: 10px;
  height: 10px;
  flex-shrink: 0;
  position: relative;
}
.arrow--open::before {
  content: "";
  position: absolute;
  left: 0;
  top: 2px;
  border-left: 5px solid transparent;
  border-right: 5px solid transparent;
  border-top: 8px solid #707070;
}
.arrow--closed::before {
  content: "";
  position: absolute;
  left: 2px;
  top: 0;
  border-top: 5px solid transparent;
  border-bottom: 5px solid transparent;
  border-left: 8px solid #707070;
}
.row-icon { margin-left: 7px; margin-right: 2px; flex-shrink: 0; }
.row-name { white-space: nowrap; }
.script-icon {
  width: 12px;
  height: 14px;
  margin-left: 8px;
  margin-right: 3px;
  background: #f2f2f2;
  color: #14703a;
  font-size: 10px;
  font-weight: 700;
  line-height: 14px;
  text-align: center;
  flex-shrink: 0;
  border-radius: 1px 3px 1px 1px;
}
.scroll {
  width: 11px;
  background: #414141;
  position: relative;
  flex-shrink: 0;
  margin-right: 1px;
}
.scroll-thumb {
  position: absolute;
  left: 0;
  right: 0;
  top: 15px;
  height: 607px;
  background: #5f5f5f;
  border-radius: 5px;
}
.scroll-up, .scroll-down {
  position: absolute;
  left: 1px;
  border-left: 4px solid transparent;
  border-right: 4px solid transparent;
}
.scroll-up { top: 5px; border-bottom: 5px solid #c4c4c4; }
.scroll-down { bottom: 6px; border-top: 5px solid #c4c4c4; }

.hier-bar { padding-left: 6px; }
.search--hier { width: 213px; }
.hier-tree {
  flex: 1;
  overflow: hidden;
  background: linear-gradient(90deg, #333 32px, #383838 32px);
}
.hier-scene {
  height: 16px;
  background: #4d4d4d;
  display: flex;
  align-items: center;
  padding: 0 0 1px 33px;
  box-sizing: border-box;
  font-weight: 500;
  position: relative;
}
.hier-scene .row-icon { margin-left: 4px; margin-right: 3px; }
.kebab--scene { right: 9px; top: 3px; }
.hier-row {
  height: 16px;
  display: flex;
  align-items: center;
  white-space: nowrap;
  overflow: hidden;
  padding-bottom: 1px;
  box-sizing: border-box;
}
.hier-row--sel { background: #4d4d4d; }
.hier-icon { margin-left: 4px; margin-right: 3px; flex-shrink: 0; }

/* game */
.game-bar .gt {
  height: 20px;
  display: flex;
  align-items: center;
  border-right: 1px solid #2a2a2a;
  box-sizing: border-box;
  flex-shrink: 0;
  white-space: nowrap;
  overflow: hidden;
}
.gt-display { width: 80px; padding: 0 5px 0 3px; }
.gt-res { width: 160px; padding: 0 4px; }
.gt-scale { width: 122px; padding: 0 4px 0 7px; }
.gt-max { width: 112px; padding-left: 5px; }
.scale-val { width: 37px; overflow: hidden; flex-shrink: 0; }
.slider {
  width: 25px;
  height: 2px;
  background: #6f6f6f;
  position: relative;
  margin: 0 8px 0 10px;
  flex-shrink: 0;
}
.slider::before {
  content: "";
  position: absolute;
  left: -3px;
  top: -4px;
  width: 10px;
  height: 10px;
  border-radius: 50%;
  background: #9a9a9a;
}
.game-strip { height: 28px; background: #282828; flex-shrink: 0; }
.game-screen {
  height: 848px;
  background: #000;
  color: #fff;
  font-size: 24.500px;
  font-weight: 300;
  line-height: 28px;
  text-align: center;
  display: flex;
  flex-direction: column;
  justify-content: center;
  padding: 0 4px 44px 0;
  box-sizing: border-box;
  flex-shrink: 0;
}
.game-foot { flex: 1; background: #282828; }

/* inspector */
.insp-head {
  height: 59px;
  padding: 10px 4px 0 8px;
  box-sizing: border-box;
  flex-shrink: 0;
}
.head-row {
  display: flex;
  align-items: flex-start;
  height: 16px;
}
.big-cube { margin-right: 11px; flex-shrink: 0; }
.check {
  width: 14px;
  height: 14px;
  background: #303030;
  border: 1px solid #232323;
  border-radius: 2px;
  box-sizing: border-box;
  display: block;
  flex-shrink: 0;
  position: relative;
}
.check--on { background: #2a2a2a; }
.check--on::after {
  content: "";
  position: absolute;
  left: 3px;
  top: 1px;
  width: 3px;
  height: 7px;
  border: solid #eee;
  border-width: 0 1.500px 1.500px 0;
  transform: rotate(40deg);
}
.name-input {
  width: 138px;
  height: 16px;
  margin-left: 6px;
  background: #2a2a2a;
  border: 1px solid #212121;
  border-radius: 3px;
  box-sizing: border-box;
  padding-left: 2px;
  line-height: 14px;
  font-weight: 600;
  flex-shrink: 0;
}
.check--static { margin-left: 4px; }
.static-label { margin-left: 4px; white-space: nowrap; color: #aaa; display: flex; align-items: center; gap: 1px; }
.tag-row { display: flex; align-items: center; margin: 8px 0 0 34px; height: 17px; }
.tag-label { width: 27px; color: #aaa; flex-shrink: 0; }
.tag-label--layer { width: 37px; margin-left: 14px; }
.pop {
  height: 17px;
  background: #454545;
  border: 1px solid #2f2f2f;
  border-radius: 3px;
  box-sizing: border-box;
  display: flex;
  align-items: center;
  padding: 0 4px;
  flex-shrink: 0;
}
.pop--tag { width: 80px; }
.pop--layer { width: 70px; }

.comp-head {
  height: 22px;
  border-top: 1px solid #1f1f1f;
  border-bottom: 1px solid #2a2a2a;
  box-sizing: border-box;
  display: flex;
  align-items: center;
  padding-left: 6px;
  flex-shrink: 0;
  background: #3c3c3c;
}
.transform-icon { margin-left: 6px; }
.comp-title { font-weight: 700; white-space: nowrap; }
.comp-title--plain { margin-left: 26px; }
.comp-title--clip { margin-left: 6px; width: 148px; overflow: hidden; }
.comp-title--meta { margin-left: 19px; }
.script-icon--comp { margin-left: 6px; margin-right: 7px; }
.comp-actions {
  margin-left: auto;
  padding-right: 10px;
  display: flex;
  align-items: center;
  gap: 9px;
}
.help { color: #c4c4c4; }
.comp-actions .kebab--static { margin-left: 7px; }

.transform-body {
  padding: 4px 3px 7px 19px;
  display: flex;
  flex-direction: column;
  gap: 2px;
}
.vec-row { display: flex; align-items: center; height: 18px; }
.vec-label { width: 66px; flex-shrink: 0; color: #aaa; }
.axis-label { width: 11px; flex-shrink: 0; color: #aaa; }
.axis-label--y { margin-left: 6px; }
.axis-label--z { margin-left: 5px; }
.field {
  height: 18px;
  background: #2a2a2a;
  border: 1px solid #212121;
  border-radius: 3px;
  box-sizing: border-box;
  padding-left: 2px;
  line-height: 16px;
  flex-shrink: 0;
}
.vec-field { width: 47px; }
.vec-field--z { width: 48px; }

.segment-body { padding: 11px 3px 8px 5px; }
.foldout {
  height: 21px;
  border: 1px solid #0d0d0d;
  box-sizing: border-box;
  display: flex;
  align-items: center;
  padding-left: 3px;
  gap: 3px;
  font-weight: 700;
  width: 267px;
  position: relative;
}
.fold-help { position: absolute; right: 7px; top: 4px; color: #5d5d5d; }
.prop {
  display: flex;
  align-items: center;
  height: 18px;
  padding-left: 14px;
}
.prop + .prop { margin-top: 2px; }
.prop-label { width: 121px; color: #aaa; flex-shrink: 0; white-space: nowrap; }
.prop--bake { margin-top: 7px; height: 14px; }
.prop-field { width: 131px; }
.wide-btn {
  width: 251px;
  height: 16px;
  margin: 5px 0 0 14px;
  background: #585858;
  border-radius: 2px;
  text-align: center;
  line-height: 16px;
  color: #ddd;
}
.helpbox {
  width: 252px;
  height: 64px;
  margin: 9px 0 0 14px;
  border: 1px solid #2c2c2c;
  border-radius: 3px;
  background: #3f3f3f;
  box-sizing: border-box;
  display: flex;
  align-items: center;
  padding-left: 4px;
}
.help-bubble { flex-shrink: 0; }
.help-lines {
  margin-left: 5px;
  font-size: 10px;
  line-height: 12px;
  color: #a0a0a0;
  white-space: nowrap;
}
.meta-body { padding: 4px 3px 7px 5px; }
.foldout--uv { margin: 10px 0 4px; height: 20px; }
.add-wrap {
  border-top: 1px solid #1f1f1f;
  padding: 9px 0 0 23px;
}
.add-btn {
  width: 228px;
  height: 22px;
  background: #585858;
  border-radius: 3px;
  text-align: center;
  line-height: 22px;
  color: #ddd;
}

/* bottom */
.statusbar {
  height: 22px;
  background: #191919;
  display: flex;
  align-items: center;
  justify-content: flex-end;
  flex-shrink: 0;
  color: #a8a8a8;
}
.status-text { margin-right: 31px; white-space: nowrap; }
.status-b {
  width: 8px;
  height: 14px;
  background: #333;
  font-size: 10px;
  line-height: 14px;
  color: #888;
  overflow: hidden;
}
.taskbar {
  height: 8px;
  background: #003f50;
  position: relative;
  overflow: hidden;
  display: flex;
  flex-shrink: 0;
}
.task-active {
  width: 160px;
  margin-left: 471px;
  background: #00708a;
}
.task-clock {
  position: absolute;
  left: 1863px;
  top: 1px;
  color: #fff;
  font-size: 12px;
}
.annot-arrow {
  position: absolute;
  left: 0;
  top: 0;
  pointer-events: none;
}
.watermark {
  position: absolute;
  left: 1674px;
  top: 1019px;
  color: #b0b0b0;
  font-family: "Liberation Sans", Arial, sans-serif;
  font-size: 16px;
  line-height: 20px;
  white-space: nowrap;
}
</style>
